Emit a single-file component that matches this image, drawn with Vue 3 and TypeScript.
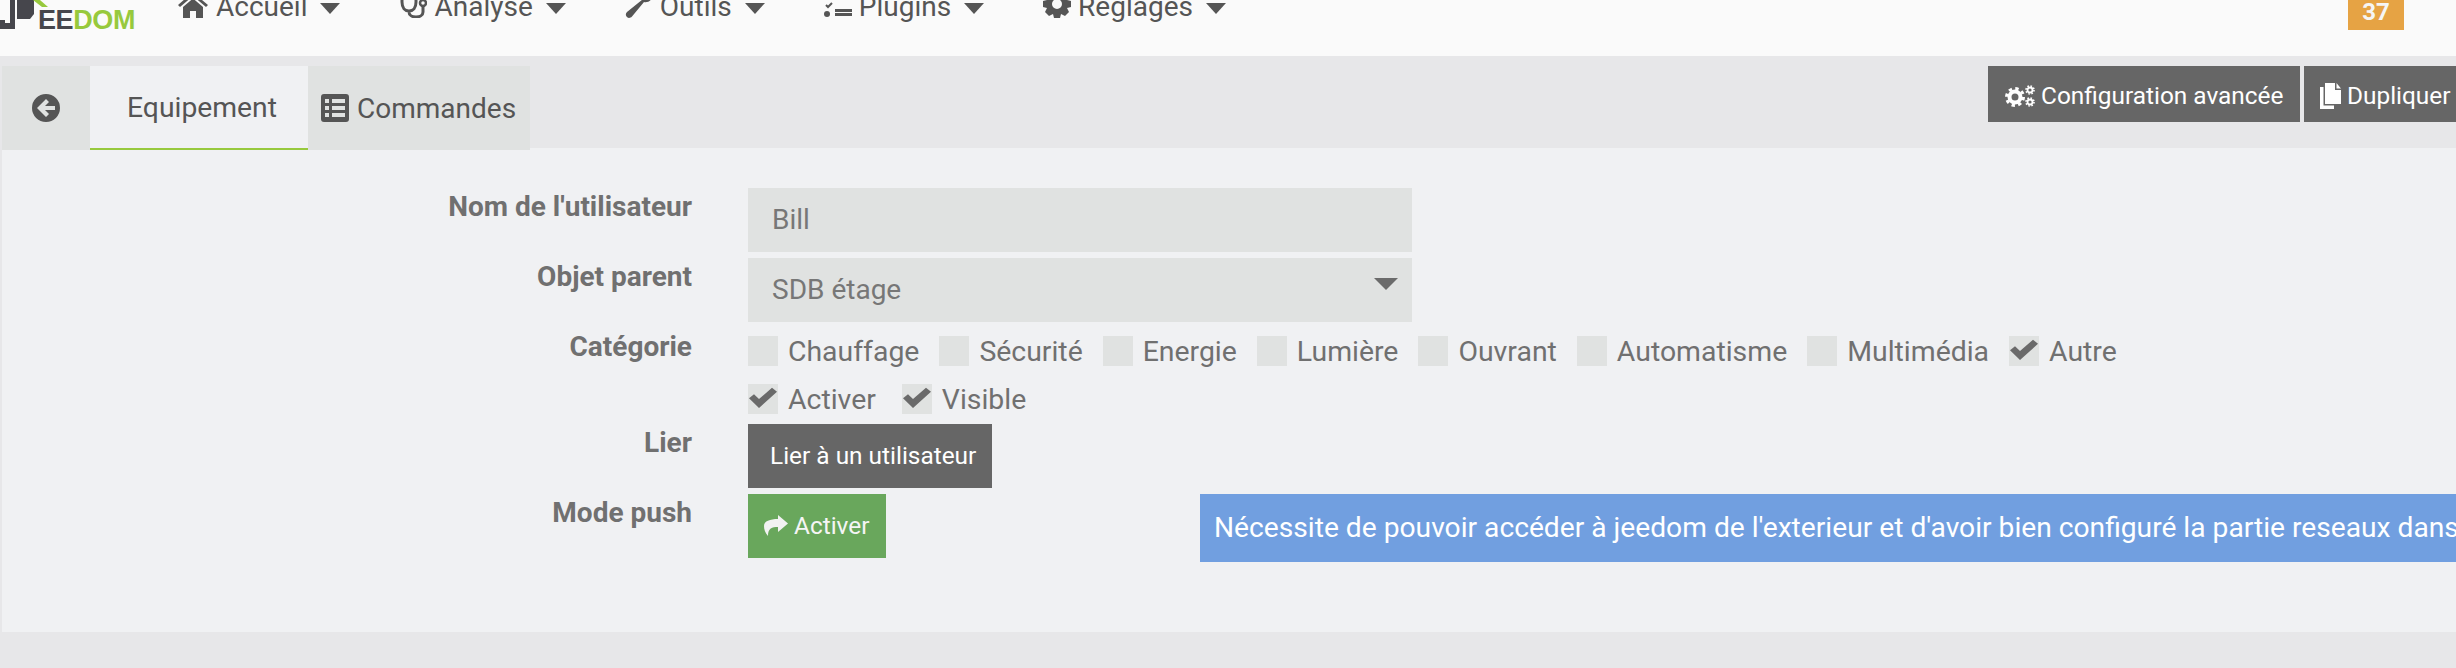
<script setup lang="ts">
const navItems = [
  { label: 'Accueil', icon: 'home' },
  { label: 'Analyse', icon: 'steth' },
  { label: 'Outils', icon: 'wrench' },
  { label: 'Plugins', icon: 'tasks' },
  { label: 'Réglages', icon: 'cog' },
]
const categories = [
  { label: 'Chauffage', on: false },
  { label: 'Sécurité', on: false },
  { label: 'Energie', on: false },
  { label: 'Lumière', on: false },
  { label: 'Ouvrant', on: false },
  { label: 'Automatisme', on: false },
  { label: 'Multimédia', on: false },
  { label: 'Autre', on: true },
]
const flags = [
  { label: 'Activer', on: true },
  { label: 'Visible', on: true },
]
</script>

<template>
  <div class="page">
    <header class="nav">
      <div class="logo">
        <svg class="logo-mark" viewBox="0 0 48 30" width="48" height="30">
          <path d="M0 20h5v3h5V0h5v29H0z" fill="#46464c" />
          <path d="M17 0h17v14l-4 5H17z" fill="#46464c" />
          <path d="M33 0h7l8 7h-6z" fill="#97c93d" />
        </svg>
        <span class="logo-text"><span class="logo-dark">EE</span><span class="logo-green">DOM</span></span>
      </div>
      <nav class="menu">
        <div v-for="item in navItems" :key="item.label" class="menu-item">
          <svg v-if="item.icon === 'home'" class="mi" viewBox="0 0 32 28" width="32" height="28"><path d="M16 2 1 15l2 2 13-11 13 11 2-2-6-5V3h-4v3.500zM6 17v11h7v-7h6v7h7V17L16 8.500z" fill="#555" /></svg>
          <svg v-else-if="item.icon === 'steth'" class="mi" viewBox="0 0 28 28" width="28" height="28"><path d="M3 0v12c0 6 3 9 7 9s7-3 7-9V0M10 21v1c0 3 3 5 7 5s7-2 7-5v-6" fill="none" stroke="#555" stroke-width="3" /><circle cx="24" cy="13" r="3" fill="none" stroke="#555" stroke-width="2.500" /></svg>
          <svg v-else-if="item.icon === 'wrench'" class="mi" viewBox="0 0 28 28" width="28" height="28"><path d="M25 0c-5 0-8 3-8 7 0 1 0 2 .5 2.500L2 22c-2 2-1 4 0 5s3 1.500 5-.5L19 12c4 1 9-2 9-8l-5 3-3-2 3-4z" fill="#555" /></svg>
          <svg v-else-if="item.icon === 'tasks'" class="mi" viewBox="0 0 28 28" width="28" height="28"><path d="M2 15l2 2 4-4" fill="none" stroke="#555" stroke-width="2" /><circle cx="3" cy="24" r="3" fill="#555" /><path d="M11 19h17v3H11zM11 23h17v3H11z" fill="#555" /></svg>
          <svg v-else class="mi" viewBox="0 0 28 28" width="28" height="28"><path d="M11 0h6l1 4 4-2 4 4-2 4 4 1v6l-4 1 2 4-4 4-4-2-1 4h-6l-1-4-4 2-4-4 2-4-4-1v-6l4-1-2-4 4-4 4 2zM14 9a5 5 0 1 0 0 10 5 5 0 0 0 0-10z" fill="#555" fill-rule="evenodd" /></svg>
          <span class="menu-label">{{ item.label }}</span>
          <span class="caret"></span>
        </div>
      </nav>
      <span class="badge">37</span>
    </header>

    <main class="main">
      <div class="tabbar">
        <div class="tabs">
          <div class="tab tab-back">
            <svg viewBox="0 0 28 28" width="28" height="28"><path d="M14 0a14 14 0 1 1 0 28 14 14 0 0 1 0-28zm9 12H13l4-4-3-3-9 9 9 9 3-3-4-4h10z" fill="#555" fill-rule="evenodd" /></svg>
          </div>
          <div class="tab tab-active">Equipement</div>
          <div class="tab tab-cmd">
            <svg viewBox="0 0 28 28" width="28" height="28"><path d="M3 0h22a3 3 0 0 1 3 3v22a3 3 0 0 1-3 3H3a3 3 0 0 1-3-3V3a3 3 0 0 1 3-3zm1 5v4h4V5zm7 0v4h13V5zM4 12v4h4v-4zm7 0v4h13v-4zM4 19v4h4v-4zm7 0v4h13v-4z" fill="#555" fill-rule="evenodd" /></svg>
            <span>Commandes</span>
          </div>
        </div>
        <div class="actions">
          <div class="dark-btn btn-config">
            <svg viewBox="0 0 30 22" width="30" height="22">
              <circle cx="10" cy="12" r="5.500" fill="none" stroke="#fff" stroke-width="4" />
              <circle cx="10" cy="12" r="8.500" fill="none" stroke="#fff" stroke-width="3" stroke-dasharray="3.340 3.340" />
              <circle cx="25" cy="5" r="2.500" fill="none" stroke="#fff" stroke-width="1.800" />
              <circle cx="25" cy="5" r="4" fill="none" stroke="#fff" stroke-width="1.600" stroke-dasharray="1.570 1.570" />
              <circle cx="25" cy="17" r="2.500" fill="none" stroke="#fff" stroke-width="1.800" />
              <circle cx="25" cy="17" r="4" fill="none" stroke="#fff" stroke-width="1.600" stroke-dasharray="1.570 1.570" />
            </svg>
            <span>Configuration avancée</span>
          </div>
          <div class="dark-btn btn-dup">
            <svg viewBox="0 0 21 26" width="21" height="26"><path d="M5 0h10v7h6v14H5z" fill="#fff" /><path d="M16.500 0 21 5.500h-4.500z" fill="#fff" /><path d="M0 4h3.500v18.500H14V26H0z" fill="#fff" /></svg>
            <span>Dupliquer</span>
          </div>
        </div>
      </div>

      <section class="panel">
        <div class="row row-field">
          <label class="lbl">Nom de l'utilisateur</label>
          <div class="field">Bill</div>
        </div>
        <div class="row row-field">
          <label class="lbl">Objet parent</label>
          <div class="field field-select">SDB étage<span class="select-caret"></span></div>
        </div>
        <div class="row row-cats">
          <label class="lbl">Catégorie</label>
          <div class="checks">
            <div v-for="c in categories" :key="c.label" class="check">
              <span class="box">
                <svg v-if="c.on" class="tick" viewBox="0 0 30 26" preserveAspectRatio="none"><path d="M1 14l5-5 5 6L24 1l5 5-18 20z" fill="#6a6a6a" /></svg>
              </span>
              <span>{{ c.label }}</span>
            </div>
          </div>
        </div>
        <div class="row row-flags">
          <div class="lbl"></div>
          <div class="checks checks-flat">
            <div v-for="c in flags" :key="c.label" class="check">
              <span class="box">
                <svg v-if="c.on" class="tick" viewBox="0 0 30 26" preserveAspectRatio="none"><path d="M1 14l5-5 5 6L24 1l5 5-18 20z" fill="#6a6a6a" /></svg>
              </span>
              <span>{{ c.label }}</span>
            </div>
          </div>
        </div>
        <div class="row row-link">
          <label class="lbl">Lier</label>
          <div class="btn-link">Lier à un utilisateur</div>
        </div>
        <div class="row row-push">
          <label class="lbl">Mode push</label>
          <div class="btn-push">
            <svg viewBox="0 0 24 24" width="24" height="24"><path d="M14 2l10 8.500L14 19v-5c-6 0-10 1-10 9C1 20 0 16 0 13 0 8 6 6 14 6z" fill="#f2f2f2" /></svg>
            <span>Activer</span>
          </div>
          <div class="notice">Nécessite de pouvoir accéder à jeedom de l'exterieur et d'avoir bien configuré la partie reseaux dans</div>
        </div>
      </section>
    </main>
  </div>
</template>

<style>
html, body { margin: 0; background: #e7e7e9; }
</style>

<style scoped>
.page {
  width: 2456px;
  height: 668px;
  overflow: hidden;
  display: flex;
  flex-direction: column;
  font-family: Roboto, "Liberation Sans", sans-serif;
  background: #e7e7e9;
}
.nav {
  height: 56px;
  flex: none;
  overflow: hidden;
  background: #fafafa;
  display: flex;
  align-items: flex-start;
}
.logo {
  width: 177px;
  flex: none;
  display: flex;
  align-items: flex-start;
}
.logo-mark { flex: none; }
.logo-text {
  font-family: "Liberation Sans", sans-serif;
  font-weight: 700;
  font-size: 27px;
  line-height: 20px;
  height: 20px;
  margin-top: 10px;
  margin-left: -10px;
  letter-spacing: -0.4px;
}
.logo-dark { color: #46464c; }
.logo-green { color: #97c93d; }
.menu {
  display: flex;
  gap: 59px;
  margin-top: -10px;
}
.menu-item {
  display: flex;
  align-items: center;
  height: 32px;
  font-size: 28px;
  color: #555;
}
.mi { flex: none; margin-right: 7px; margin-top: -4px; }
.caret {
  width: 0;
  height: 0;
  margin-left: 13px;
  margin-top: 5px;
  border-left: 10px solid transparent;
  border-right: 10px solid transparent;
  border-top: 11px solid #555;
}
.badge {
  margin-left: auto;
  margin-right: 52px;
  width: 56px;
  height: 30px;
  background: #e6a344;
  color: #f5f5f5;
  font-weight: 700;
  font-size: 24px;
  line-height: 24px;
  text-align: center;
}
.main {
  flex: none;
  height: 612px;
  padding: 10px 0 36px 2px;
  box-sizing: border-box;
  display: flex;
  flex-direction: column;
}
.tabbar {
  height: 82px;
  flex: none;
  display: flex;
  justify-content: space-between;
  align-items: flex-start;
  position: relative;
  z-index: 1;
}
.tabs {
  display: flex;
  height: 84px;
}
.tab {
  height: 84px;
  box-sizing: border-box;
  display: flex;
  align-items: center;
  font-size: 28.3px;
  color: #555;
  background: #e0e2e1;
}
.tab-back { width: 88px; padding-left: 30px; }
.tab-active {
  width: 218px;
  padding-left: 37px;
  background: #f0f1f3;
  border-bottom: 2px solid #97c93d;
}
.tab-cmd { width: 222px; padding-left: 13px; gap: 8px; }
.tab-cmd span { font-size: 28px; }
.actions {
  display: flex;
  gap: 4px;
  margin-right: -1px;
}
.dark-btn {
  height: 56px;
  background: #666;
  color: #fff;
  font-size: 24.4px;
  display: flex;
  align-items: center;
  box-sizing: border-box;
  padding-top: 3px;
}
.btn-config { width: 312px; padding-left: 17px; gap: 6px; }
.btn-dup { width: 153px; padding-left: 16px; gap: 6px; }
.panel {
  flex: 1;
  background: #f0f1f3;
  padding-top: 40px;
  display: flex;
  flex-direction: column;
  overflow: hidden;
}
.row { display: flex; align-items: flex-start; }
.lbl {
  width: 690px;
  flex: none;
  text-align: right;
  font-size: 28px;
  font-weight: 700;
  color: #707070;
  line-height: 38px;
}
.row-field { height: 70px; }
.row-field .field { margin-left: 56px; }
.field {
  width: 664px;
  height: 64px;
  box-sizing: border-box;
  padding: 0 25px 0 24px;
  background: #e0e2e1;
  color: #777;
  font-size: 28px;
  line-height: 64px;
  position: relative;
}
.select-caret {
  position: absolute;
  right: 14px;
  top: 20px;
  width: 0;
  height: 0;
  border-left: 12px solid transparent;
  border-right: 12px solid transparent;
  border-top: 12px solid #6b6b6b;
}
.row-cats { height: 56px; }
.row-flags { height: 40px; }
.checks {
  margin-left: 56px;
  margin-top: 8px;
  display: flex;
  gap: 20px;
}
.checks-flat { margin-top: 0; gap: 26px; }
.check {
  display: flex;
  align-items: center;
  gap: 10px;
  height: 30px;
  font-size: 28.4px;
  color: #707070;
}
.box {
  width: 30px;
  height: 30px;
  flex: none;
  background: #e0e2e1;
  display: flex;
  align-items: flex-start;
  justify-content: center;
}
.tick {
  width: 30px;
  height: 21px;
  margin-top: 3px;
}
.row-link { height: 70px; }
.btn-link {
  margin-left: 56px;
  width: 244px;
  height: 64px;
  box-sizing: border-box;
  padding-left: 22px;
  background: #666;
  color: #fff;
  font-size: 24.4px;
  line-height: 64px;
  white-space: nowrap;
}
.row-push { height: 68px; }
.btn-push {
  margin-left: 56px;
  width: 138px;
  height: 64px;
  box-sizing: border-box;
  padding-left: 16px;
  padding-bottom: 2px;
  gap: 6px;
  background: #69a75c;
  color: #f5f5f5;
  font-size: 24.4px;
  display: flex;
  align-items: center;
}
.notice {
  margin-left: 314px;
  flex: 1;
  min-width: 0;
  height: 68px;
  box-sizing: border-box;
  padding-left: 14px;
  background: #719fe0;
  color: #fff;
  font-size: 28.2px;
  line-height: 68px;
  white-space: nowrap;
  overflow: hidden;
}
</style>
